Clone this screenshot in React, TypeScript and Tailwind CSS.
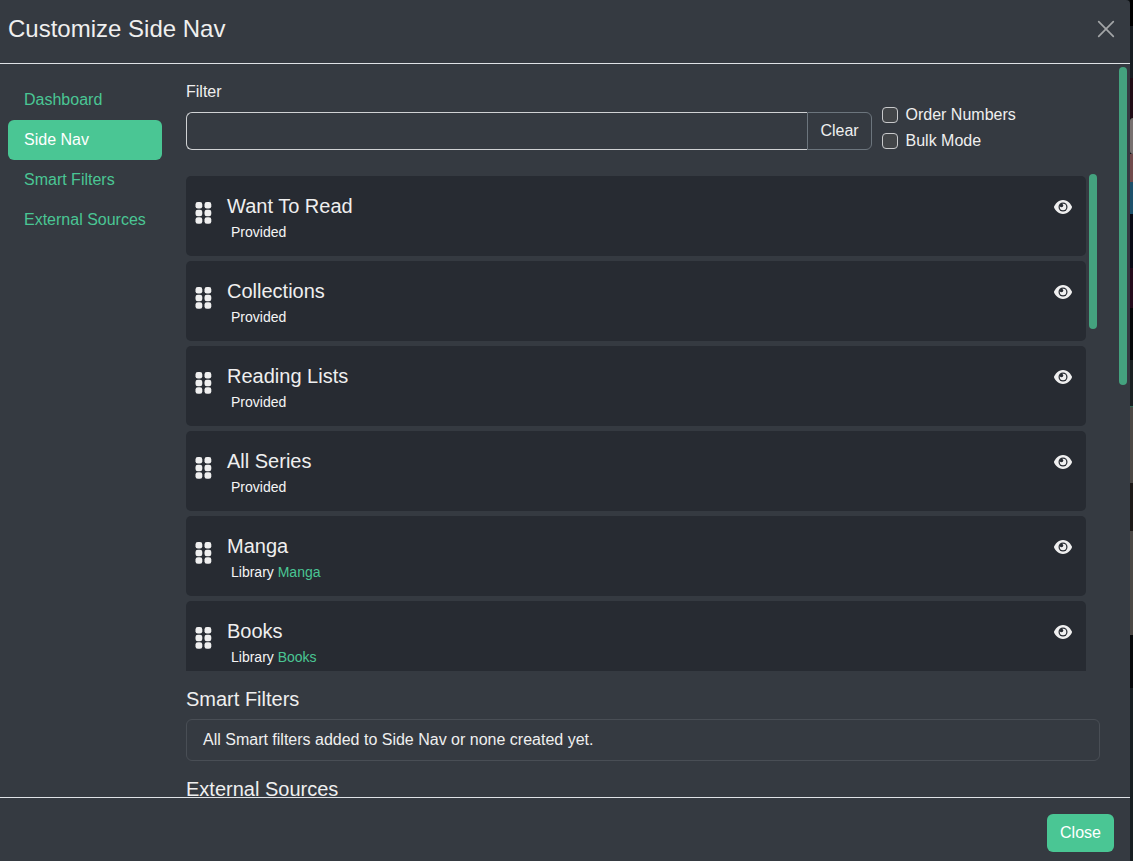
import React from "react";

const tabs = ["Dashboard", "Side Nav", "Smart Filters", "External Sources"];

const items: { name: string; library?: string }[] = [
  { name: "Want To Read" },
  { name: "Collections" },
  { name: "Reading Lists" },
  { name: "All Series" },
  { name: "Manga", library: "Manga" },
  { name: "Books", library: "Books" },
];

function Grip() {
  return (
    <svg width="17" height="22" viewBox="0 0 17 22" fill="#efefef" className="mt-[26px] ml-[9px] shrink-0">
      {[0.5, 9.5].map((x) =>
        [0.1, 7.7, 15.2].map((y) => <rect key={`${x}-${y}`} x={x} y={y} width="6.8" height="6.5" rx="2.3" />)
      )}
    </svg>
  );
}

function Eye() {
  return (
    <svg viewBox="0 0 576 512" className="mt-[23px] mr-[14px] h-4 w-[18px] shrink-0">
      <path
        fill="#efefef"
        d="M480.6 112.6C527.4 156 558.7 207.1 573.5 243.7C576.8 251.6 576.8 260.4 573.5 268.3C558.7 304 527.4 355.1 480.6 399.4C433.5 443.2 368.8 480 288 480C207.2 480 142.5 443.2 95.42 399.4C48.62 355.1 17.34 304 2.461 268.3C-.8205 260.4-.8205 251.6 2.461 243.7C17.34 207.1 48.62 156 95.42 112.6C142.5 68.84 207.2 32 288 32C368.8 32 433.5 68.84 480.6 112.6z"
      />
      <circle cx="288" cy="256" r="144" fill="#272b32" />
      <circle cx="288" cy="256" r="105" fill="#efefef" />
      <circle cx="238" cy="206" r="58" fill="#272b32" />
    </svg>
  );
}

function Item({ name, library }: { name: string; library?: string }) {
  return (
    <li className="flex h-20 shrink-0 rounded-[5px] bg-[#272b32]">
      <Grip />
      <div className="ml-[15px] flex-1 pt-[18px]">
        <h5 className="text-xl leading-6">{name}</h5>
        <div className="pt-1 pl-1 text-sm leading-[21px] text-[#f5f5f5]">
          {library ? (
            <>
              Library <span className="text-[#4ac694]">{library}</span>
            </>
          ) : (
            "Provided"
          )}
        </div>
      </div>
      <Eye />
    </li>
  );
}

function Check({ label }: { label: string }) {
  return (
    <label className="flex h-[26px] items-center gap-[7.5px]">
      <span className="h-4 w-4 rounded-[4px] border border-[#c8c9cb] bg-[#424548]" />
      {label}
    </label>
  );
}

export default function App() {
  return (
    <div className="flex h-[861px] w-[1133px] overflow-hidden bg-[#0b0d0f] font-['Liberation_Sans',Arial,sans-serif] text-base leading-6 text-[#efefef]">
      <div className="flex w-[1130px] flex-col rounded-tr-[4px] bg-[#353a41]">
        <header className="flex h-16 shrink-0 items-start justify-between border-b border-[#dfe2e6] pt-[11px] pr-[15px] pl-2">
          <h4 className="text-2xl leading-9">Customize Side Nav</h4>
          <svg width="18" height="18" viewBox="0 0 18 18" stroke="#a3a5a7" strokeWidth="1.7" strokeLinecap="round" className="mt-[9px]">
            <path d="M1.7 1.7 16.3 16.3M16.3 1.7 1.7 16.3" />
          </svg>
        </header>

        <div className="flex min-h-0 flex-1 overflow-hidden">
          <nav className="mt-4 ml-2 w-[154px] shrink-0">
            {tabs.map((tab) => (
              <div
                key={tab}
                className={
                  tab === "Side Nav"
                    ? "h-10 rounded-md bg-[#4ac694] px-4 py-2 leading-[23px] text-white"
                    : "h-10 px-4 py-2 leading-[23px] text-[#4ac694]"
                }
              >
                {tab}
              </div>
            ))}
          </nav>

          <main className="ml-6 w-[914px] shrink-0 pt-4">
            <div className="flex h-20">
              <div className="w-[686px]">
                <label>Filter</label>
                <div className="mt-2 flex h-[38px]">
                  <div className="flex-1 rounded-l-md border border-r-0 border-[#d0d2d4]" />
                  <div className="w-[65px] rounded-r-md border border-[#6c757d] text-center leading-[35px]">Clear</div>
                </div>
              </div>
              <div className="ml-[10px] pt-[22px]">
                <Check label="Order Numbers" />
                <Check label="Bulk Mode" />
              </div>
            </div>

            <div className="mt-[14px] flex h-[497px]">
              <ul className="flex w-[900px] flex-col gap-[5px] overflow-hidden pt-[2px]">
                {items.map((item) => (
                  <Item key={item.name} {...item} />
                ))}
              </ul>
              <div className="ml-[3px] h-[155px] w-2 rounded-full bg-[#44a27e]" />
            </div>

            <h5 className="mt-4 text-xl leading-6">Smart Filters</h5>
            <div className="mt-2 h-[42px] rounded-md border border-[#494e55] px-4 leading-[39px]">
              All Smart filters added to Side Nav or none created yet.
            </div>
            <h5 className="mt-4 text-xl leading-6">External Sources</h5>
          </main>

          <div className="mt-[3px] ml-[19px] h-[318px] w-2 shrink-0 rounded-full bg-[#44a27e]" />
        </div>

        <footer className="flex h-16 shrink-0 justify-end border-t border-[#dfe2e6] pt-4 pr-4">
          <button className="h-[38px] w-[67px] rounded-md bg-[#4ac694] text-white">Close</button>
        </footer>
      </div>

      <div className="flex w-[3px] flex-col">
        <div className="h-[26px] bg-black" />
        <div className="h-[52px] bg-[#171c21]" />
        <div className="h-[40px] bg-[#210c16]" />
        <div className="h-[36px] rounded-l-full bg-[#77706f]" />
        <div className="h-[28px] bg-[#704a4b]" />
        <div className="h-[32px] bg-[#1c506b]" />
        <div className="h-[54px] bg-[#090b16]" />
        <div className="h-[40px] bg-[#240a1b]" />
        <div className="h-[52px] bg-[#050709]" />
        <div className="h-[46px] bg-[#1a2022]" />
        <div className="h-[1px] bg-[#2f6b55]" />
        <div className="h-[76px] bg-[#4b4744]" />
        <div className="h-[48px] bg-[#1d1917]" />
        <div className="h-[104px] bg-[#4a4744]" />
        <div className="h-[53px] bg-[#07090b]" />
        <div className="flex-1 bg-[#171e22]" />
      </div>
    </div>
  );
}
